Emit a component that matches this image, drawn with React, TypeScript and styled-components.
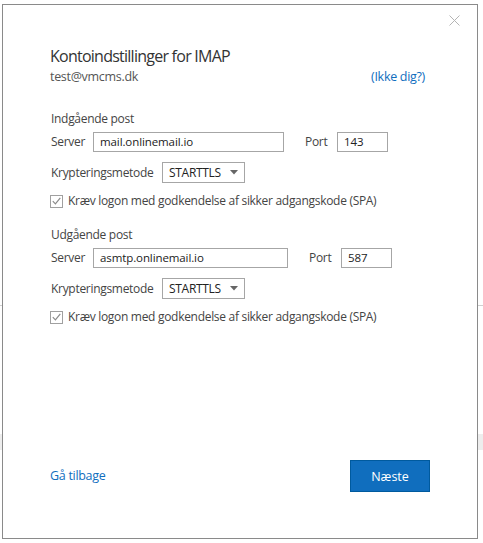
import styled, { createGlobalStyle } from "styled-components";

const GlobalStyle = createGlobalStyle`
  html, body {
    margin: 0;
    padding: 0;
    background: #ffffff;
  }
  body {
    font-family: "Open Sans", "Noto Sans", Arial, sans-serif;
  }
`;

interface iSection {
  heading: string;
  server: string;
  serverWidth: number;
  port: string;
  method: string;
}

const sections: iSection[] = [
  { heading: "Indgående post", server: "mail.onlinemail.io", serverWidth: 191, port: "143", method: "STARTTLS" },
  { heading: "Udgående post", server: "asmtp.onlinemail.io", serverWidth: 195, port: "587", method: "STARTTLS" },
];

const CheckIcon = () => (
  <svg width="9" height="8" viewBox="0 0 9 8">
    <path d="M0.8 4.2 L3.4 6.8 L8.3 0.8" fill="none" stroke="#8a8a8a" strokeWidth="1.2" />
  </svg>
);

const CloseIcon = () => (
  <svg width="11" height="11" viewBox="0 0 11 11">
    <path d="M0.5 0.5 L10.5 10.5 M10.5 0.5 L0.5 10.5" stroke="#b4b4b4" strokeWidth="1" />
  </svg>
);

const ArrowIcon = () => (
  <svg width="8" height="5" viewBox="0 0 8 5">
    <path d="M0 0 L8 0 L4 4.5 Z" fill="#666666" />
  </svg>
);

export default function App() {
  return (
    <Page>
      <GlobalStyle />
      <Background>
        <BgRow $height={305} />
        <BgBand />
        <BgFooter>
          <span>Tommy Daugaard Sørensen</span>
          <span>INFO: Ansættelse</span>
        </BgFooter>
      </Background>
      <Dialog>
        <CloseButton>
          <CloseIcon />
        </CloseButton>
        <Title>Kontoindstillinger for IMAP</Title>
        <EmailRow>
          <Email>test@vmcms.dk</Email>
          <Link>(Ikke dig?)</Link>
        </EmailRow>
        {sections.map((s, i) => (
          <Section key={s.heading} $top={i === 0 ? 24 : 17}>
            <Heading>{s.heading}</Heading>
            <FieldRow>
              <Label $width={42}>Server</Label>
              <Input $width={s.serverWidth}>{s.server}</Input>
              <Label $width={32} $left={21}>Port</Label>
              <Input $width={51}>{s.port}</Input>
            </FieldRow>
            <FieldRow $top={10}>
              <Label $width={111}>Krypteringsmetode</Label>
              <Select>
                {s.method}
                <ArrowIcon />
              </Select>
            </FieldRow>
            <CheckRow>
              <CheckBox>
                <CheckIcon />
              </CheckBox>
              Kræv logon med godkendelse af sikker adgangskode (SPA)
            </CheckRow>
          </Section>
        ))}
        <Spacer />
        <Footer>
          <Link $size={12.5}>Gå tilbage</Link>
          <PrimaryButton>Næste</PrimaryButton>
        </Footer>
      </Dialog>
    </Page>
  );
}

const Page = styled.div`
  position: relative;
  width: 483px;
  height: 543px;
  overflow: hidden;
  background: #ffffff;
`;

const Background = styled.div`
  display: flex;
  flex-direction: column;
  height: 100%;
`;

const BgRow = styled.div<{ $height: number }>`
  height: ${(p) => p.$height}px;
  flex-shrink: 0;
  border-bottom: 1px solid #d0d0d0;
`;

const BgBand = styled.div`
  margin-top: 128px;
  height: 16px;
  flex-shrink: 0;
  background: #ededed;
`;

const BgFooter = styled.div`
  margin-top: auto;
  height: 10px;
  display: flex;
  padding-left: 41px;
  font-family: "Liberation Sans", Arial, sans-serif;
  font-size: 13px;
  line-height: 13px;
  color: #111;
  margin-bottom: -8px;

  span:first-child {
    width: 229px;
  }
`;

const Dialog = styled.div`
  position: absolute;
  left: 2px;
  top: 4px;
  width: 476px;
  height: 535px;
  box-sizing: border-box;
  border: 1px solid #8a8a8a;
  background: #ffffff;
  padding: 39px 47px 46px 47px;
  display: flex;
  flex-direction: column;
  color: #444444;
  letter-spacing: -0.3px;
`;

const CloseButton = styled.div`
  position: absolute;
  top: 10px;
  right: 17px;
  width: 11px;
  height: 11px;
  display: flex;
`;

const Title = styled.div`
  font-size: 16px;
  letter-spacing: -0.75px;
  line-height: 24px;
  color: #333333;
`;

const EmailRow = styled.div`
  display: flex;
  justify-content: space-between;
  align-items: center;
  padding-right: 5px;
`;

const Email = styled.div`
  font-size: 12.5px;
  line-height: 18px;
  color: #555555;
`;

const Link = styled.div<{ $size?: number }>`
  font-size: ${(p) => p.$size ?? 12.5}px;
  line-height: 18px;
  color: #106ebe;
  cursor: pointer;
`;

const Section = styled.div<{ $top: number }>`
  margin-top: ${(p) => p.$top}px;
  display: flex;
  flex-direction: column;
  font-size: 12px;
`;

const Heading = styled.div`
  line-height: 18px;
  padding-left: 1px;
`;

const FieldRow = styled.div<{ $top?: number }>`
  display: flex;
  align-items: center;
  margin-top: ${(p) => p.$top ?? 4}px;
  padding-left: 1px;
`;

const Label = styled.div<{ $width: number; $left?: number }>`
  width: ${(p) => p.$width}px;
  margin-left: ${(p) => p.$left ?? 0}px;
  line-height: 18px;
`;

const Input = styled.div<{ $width: number }>`
  box-sizing: border-box;
  width: ${(p) => p.$width}px;
  height: 20px;
  border: 1px solid #a6a6a6;
  padding: 0 6px;
  font-size: 11.5px;
  letter-spacing: -0.1px;
  line-height: 18px;
  color: #222222;
`;

const Select = styled.div`
  box-sizing: border-box;
  width: 83px;
  height: 21px;
  border: 1px solid #a6a6a6;
  padding: 0 6px;
  display: flex;
  align-items: center;
  justify-content: space-between;
  font-size: 12px;
  color: #222222;
`;

const CheckRow = styled.div`
  display: flex;
  align-items: center;
  gap: 5px;
  margin-top: 10px;
  line-height: 16px;
`;

const CheckBox = styled.div`
  box-sizing: border-box;
  width: 13px;
  height: 13px;
  border: 1px solid #a0a0a0;
  display: flex;
  align-items: center;
  justify-content: center;
`;

const Spacer = styled.div`
  flex: 1;
`;

const Footer = styled.div`
  display: flex;
  justify-content: space-between;
  align-items: center;
`;

const PrimaryButton = styled.div`
  box-sizing: border-box;
  width: 80px;
  height: 32px;
  background: #106ebe;
  border: 1px solid #005a9e;
  color: #ffffff;
  font-size: 12.5px;
  letter-spacing: 0;
  display: flex;
  align-items: center;
  justify-content: center;
  cursor: pointer;
`;
